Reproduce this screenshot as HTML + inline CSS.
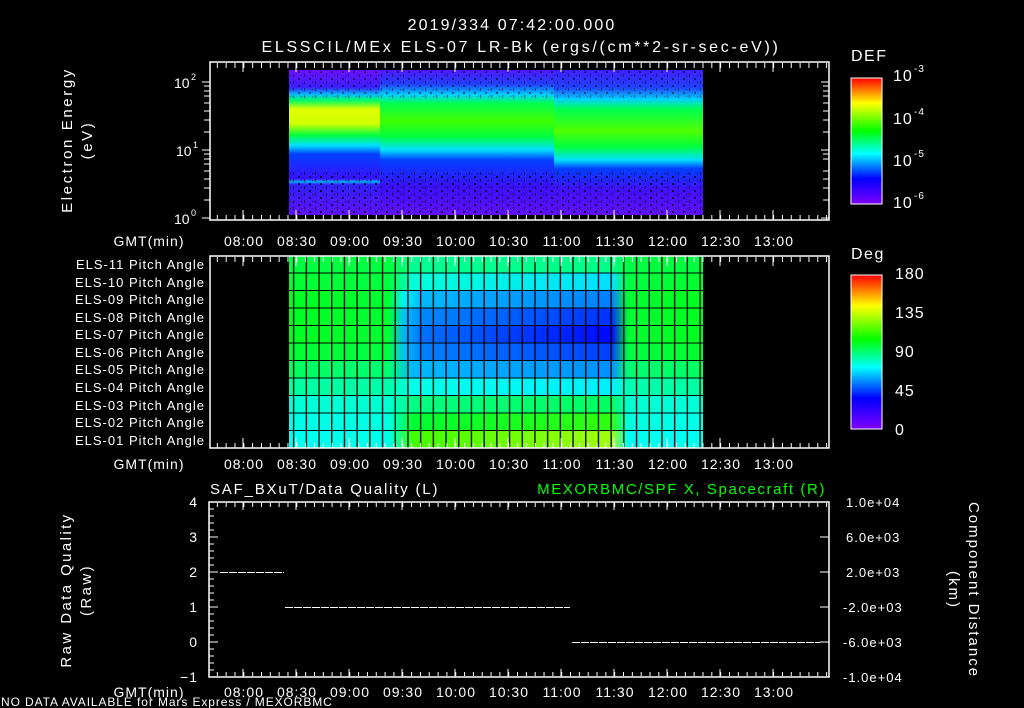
<!DOCTYPE html>
<html><head><meta charset="utf-8"><style>
html,body{margin:0;padding:0;background:#000;width:1024px;height:708px;overflow:hidden}
svg{display:block}
text{font-family:"Liberation Sans",sans-serif;fill:#fff;letter-spacing:1px}
</style></head><body>
<svg width="1024" height="708" viewBox="0 0 1024 708" xmlns="http://www.w3.org/2000/svg">
<defs>
<linearGradient id="sA" x1="0" y1="0" x2="0" y2="1">
<stop offset="0" stop-color="#6a10ff"/><stop offset="0.12" stop-color="#3a20ff"/><stop offset="0.17" stop-color="#00c0ff"/><stop offset="0.21" stop-color="#00ff60"/><stop offset="0.27" stop-color="#e0ff00"/><stop offset="0.37" stop-color="#d0ff00"/><stop offset="0.45" stop-color="#00ff40"/><stop offset="0.52" stop-color="#00e0ff"/><stop offset="0.58" stop-color="#0040ff"/><stop offset="0.75" stop-color="#3a10ff"/><stop offset="0.77" stop-color="#00b0ff"/><stop offset="0.79" stop-color="#3020ff"/><stop offset="1" stop-color="#6010ff"/></linearGradient>
<linearGradient id="sB" x1="0" y1="0" x2="0" y2="1">
<stop offset="0" stop-color="#5018ff"/><stop offset="0.1" stop-color="#2040ff"/><stop offset="0.17" stop-color="#00d0ff"/><stop offset="0.23" stop-color="#00ff50"/><stop offset="0.35" stop-color="#40ff00"/><stop offset="0.46" stop-color="#00ff40"/><stop offset="0.55" stop-color="#00e0ff"/><stop offset="0.62" stop-color="#0040ff"/><stop offset="0.8" stop-color="#3a10ff"/><stop offset="1" stop-color="#6010ff"/></linearGradient>
<linearGradient id="sC" x1="0" y1="0" x2="0" y2="1">
<stop offset="0" stop-color="#4020ff"/><stop offset="0.12" stop-color="#2040ff"/><stop offset="0.2" stop-color="#00d0ff"/><stop offset="0.27" stop-color="#00ff50"/><stop offset="0.42" stop-color="#50ff00"/><stop offset="0.53" stop-color="#00ff40"/><stop offset="0.62" stop-color="#00e0ff"/><stop offset="0.68" stop-color="#0040ff"/><stop offset="0.82" stop-color="#4010ff"/><stop offset="1" stop-color="#6010ff"/></linearGradient>
<linearGradient id="cb" x1="0" y1="0" x2="0" y2="1">
<stop offset="0" stop-color="#ff0000"/><stop offset="0.2" stop-color="#ffff00"/><stop offset="0.42" stop-color="#00ff00"/><stop offset="0.6" stop-color="#00ffff"/><stop offset="0.8" stop-color="#0000ff"/><stop offset="1" stop-color="#8000ff"/></linearGradient>
<pattern id="noise" width="11" height="7" patternUnits="userSpaceOnUse"><rect x="1" y="1" width="2" height="2" fill="#000"/><rect x="7" y="4" width="1" height="3" fill="#000"/><rect x="4" y="5" width="1" height="1" fill="#000"/></pattern>
<pattern id="grid" x="289" y="256" width="12.7" height="17.5" patternUnits="userSpaceOnUse"><rect x="4" y="0" width="1.3" height="17.5" fill="#000"/><rect x="0" y="16.5" width="12.7" height="1.3" fill="#000"/></pattern>
<pattern id="mt" x="208" y="0" width="8.83" height="10" patternUnits="userSpaceOnUse"><rect x="0" y="0" width="1" height="10" fill="#fff"/></pattern>
</defs>

<text x="512" y="30" font-size="16" text-anchor="middle" style="letter-spacing:2.1px">2019/334 07:42:00.000</text>
<text x="521" y="52" font-size="16" text-anchor="middle" style="letter-spacing:2.7px">ELSSCIL/MEx ELS-07 LR-Bk  (ergs/(cm**2-sr-sec-eV))</text>

<!-- top panel -->
<rect x="289" y="70" width="95" height="145" fill="url(#sA)"/>
<rect x="380" y="70" width="178" height="145" fill="url(#sB)"/>
<rect x="554" y="70" width="149" height="145" fill="url(#sC)"/>
<rect x="289" y="70" width="414" height="28" fill="url(#noise)" opacity="0.5"/>
<rect x="289" y="172" width="414" height="43" fill="url(#noise)" opacity="0.7"/>
<g fill="none" stroke="#fff" stroke-width="1.5"><rect x="210" y="62" width="619" height="158"/></g>
<rect x="210" y="63" width="619" height="5" fill="url(#mt)"/>
<rect x="210" y="215" width="619" height="5" fill="url(#mt)"/>
<g stroke="#fff" stroke-width="1">
<path d="M243 62v10M296 62v10M349 62v10M402 62v10M455 62v10M508 62v10M561 62v10M614 62v10M667 62v10M720 62v10M773 62v10M243 220v-10M296 220v-10M349 220v-10M402 220v-10M455 220v-10M508 220v-10M561 220v-10M614 220v-10M667 220v-10M720 220v-10M773 220v-10"/>
<path d="M202 82h8M202 150h8M202 218h8M204 200h6M204 188h6M204 179h6M204 171h6M204 164h6M204 159h6M204 154h6M204 132h6M204 120h6M204 111h6M204 103h6M204 96h6M204 91h6M204 86h6"/>
<path d="M829 82h-8M829 150h-8M829 218h-8M829 132h-6M829 120h-6M829 111h-6M829 103h-6M829 200h-6M829 188h-6M829 179h-6M829 171h-6M829 86h-6M829 91h-6M829 96h-6M829 154h-6M829 159h-6"/>
</g>
<text x="174" y="88" font-size="14" style="letter-spacing:0">10</text><text x="191" y="80" font-size="9">2</text>
<text x="176" y="156" font-size="14" style="letter-spacing:0">10</text><text x="193" y="148" font-size="9">1</text>
<text x="174" y="224" font-size="14" style="letter-spacing:0">10</text><text x="191" y="216" font-size="9">0</text>
<text transform="translate(72,140) rotate(-90)" font-size="15" text-anchor="middle" style="letter-spacing:2.6px">Electron Energy</text>
<text transform="translate(92,140) rotate(-90)" font-size="15" text-anchor="middle" style="letter-spacing:2.6px">(eV)</text>

<g font-size="14" text-anchor="middle" style="letter-spacing:1.3px">
<text x="149" y="246">GMT(min)</text>
<text x="244" y="246">08:00</text><text x="297" y="246">08:30</text><text x="350" y="246">09:00</text><text x="403" y="246">09:30</text><text x="456" y="246">10:00</text><text x="509" y="246">10:30</text><text x="562" y="246">11:00</text><text x="615" y="246">11:30</text><text x="668" y="246">12:00</text><text x="721" y="246">12:30</text><text x="774" y="246">13:00</text>
</g>

<!-- colorbar 1 -->
<text x="851" y="61" font-size="16" style="letter-spacing:1.5px">DEF</text>
<rect x="851" y="78" width="31" height="126" fill="url(#cb)" stroke="#fff" stroke-width="1"/>
<text x="893" y="81" font-size="16">10</text><text x="914" y="72" font-size="10">-3</text>
<text x="893" y="124" font-size="16">10</text><text x="914" y="115" font-size="10">-4</text>
<text x="893" y="166" font-size="16">10</text><text x="914" y="157" font-size="10">-5</text>
<text x="893" y="208" font-size="16">10</text><text x="914" y="199" font-size="10">-6</text>

<!-- middle panel -->
<defs>
<linearGradient id="r1"><stop offset="0" stop-color="#00ff40"/><stop offset="0.24" stop-color="#00ff40"/><stop offset="0.3" stop-color="#00ff90"/><stop offset="0.78" stop-color="#00ff88"/><stop offset="0.82" stop-color="#00ff40"/><stop offset="1" stop-color="#00ff40"/></linearGradient>
<linearGradient id="r2"><stop offset="0" stop-color="#00ff30"/><stop offset="0.24" stop-color="#00ff40"/><stop offset="0.3" stop-color="#00ffd8"/><stop offset="0.78" stop-color="#00e0ff"/><stop offset="0.82" stop-color="#00ff40"/><stop offset="1" stop-color="#00ff30"/></linearGradient>
<linearGradient id="r3"><stop offset="0" stop-color="#00ff20"/><stop offset="0.24" stop-color="#00ff30"/><stop offset="0.28" stop-color="#00f0ff"/><stop offset="0.32" stop-color="#00b8ff"/><stop offset="0.78" stop-color="#0080ff"/><stop offset="0.82" stop-color="#00ff30"/><stop offset="1" stop-color="#00ff20"/></linearGradient>
<linearGradient id="r4"><stop offset="0" stop-color="#00ff20"/><stop offset="0.24" stop-color="#00ff30"/><stop offset="0.28" stop-color="#00c0ff"/><stop offset="0.32" stop-color="#0088ff"/><stop offset="0.78" stop-color="#0030ff"/><stop offset="0.82" stop-color="#00ff30"/><stop offset="1" stop-color="#00ff20"/></linearGradient>
<linearGradient id="r5"><stop offset="0" stop-color="#00ff20"/><stop offset="0.24" stop-color="#00ff30"/><stop offset="0.28" stop-color="#00b0ff"/><stop offset="0.32" stop-color="#0070ff"/><stop offset="0.78" stop-color="#0008ff"/><stop offset="0.82" stop-color="#00ff30"/><stop offset="1" stop-color="#00ff20"/></linearGradient>
<linearGradient id="r6"><stop offset="0" stop-color="#00ff30"/><stop offset="0.24" stop-color="#00ff40"/><stop offset="0.28" stop-color="#00c0ff"/><stop offset="0.32" stop-color="#0080ff"/><stop offset="0.78" stop-color="#0040ff"/><stop offset="0.82" stop-color="#00ff40"/><stop offset="1" stop-color="#00ff30"/></linearGradient>
<linearGradient id="r7"><stop offset="0" stop-color="#00ff60"/><stop offset="0.24" stop-color="#00ff70"/><stop offset="0.3" stop-color="#00b8ff"/><stop offset="0.78" stop-color="#0090ff"/><stop offset="0.82" stop-color="#00ff70"/><stop offset="1" stop-color="#00ff60"/></linearGradient>
<linearGradient id="r8"><stop offset="0" stop-color="#00ffa0"/><stop offset="0.24" stop-color="#00ffa8"/><stop offset="0.3" stop-color="#00ffe8"/><stop offset="0.78" stop-color="#00f0ff"/><stop offset="0.82" stop-color="#00ffb0"/><stop offset="1" stop-color="#00ffa0"/></linearGradient>
<linearGradient id="r9"><stop offset="0" stop-color="#00ffd8"/><stop offset="0.24" stop-color="#00ffd0"/><stop offset="0.3" stop-color="#00ff80"/><stop offset="0.78" stop-color="#00ff60"/><stop offset="0.82" stop-color="#00ffd0"/><stop offset="1" stop-color="#00ffd8"/></linearGradient>
<linearGradient id="r10"><stop offset="0" stop-color="#00ffe8"/><stop offset="0.24" stop-color="#00ffe0"/><stop offset="0.3" stop-color="#00ff30"/><stop offset="0.78" stop-color="#30ff10"/><stop offset="0.82" stop-color="#00ffe0"/><stop offset="1" stop-color="#00ffe8"/></linearGradient>
<linearGradient id="r11"><stop offset="0" stop-color="#00fff0"/><stop offset="0.24" stop-color="#00ffe8"/><stop offset="0.3" stop-color="#40ff00"/><stop offset="0.78" stop-color="#a0ff10"/><stop offset="0.82" stop-color="#00fff0"/><stop offset="1" stop-color="#00fff0"/></linearGradient>
</defs>
<g>
<rect x="289" y="256" width="414" height="17.6" fill="url(#r1)"/>
<rect x="289" y="273.5" width="414" height="17.6" fill="url(#r2)"/>
<rect x="289" y="291" width="414" height="17.6" fill="url(#r3)"/>
<rect x="289" y="308.5" width="414" height="17.6" fill="url(#r4)"/>
<rect x="289" y="326" width="414" height="17.6" fill="url(#r5)"/>
<rect x="289" y="343.5" width="414" height="17.6" fill="url(#r6)"/>
<rect x="289" y="361" width="414" height="17.6" fill="url(#r7)"/>
<rect x="289" y="378.5" width="414" height="17.6" fill="url(#r8)"/>
<rect x="289" y="396" width="414" height="17.6" fill="url(#r9)"/>
<rect x="289" y="413.5" width="414" height="17.6" fill="url(#r10)"/>
<rect x="289" y="431" width="414" height="17" fill="url(#r11)"/>
<rect x="289" y="256" width="414" height="192" fill="url(#grid)"/>
</g>
<rect x="210" y="256" width="619" height="192" fill="none" stroke="#fff" stroke-width="1.5"/>
<rect x="210" y="257" width="619" height="5" fill="url(#mt)"/>
<rect x="210" y="443" width="619" height="5" fill="url(#mt)"/>
<path stroke="#fff" d="M243 256v10M296 256v10M349 256v10M402 256v10M455 256v10M508 256v10M561 256v10M614 256v10M667 256v10M720 256v10M773 256v10M243 448v-10M296 448v-10M349 448v-10M402 448v-10M455 448v-10M508 448v-10M561 448v-10M614 448v-10M667 448v-10M720 448v-10M773 448v-10"/>
<g font-size="13" text-anchor="end" style="letter-spacing:1.7px">
<text x="205" y="269">ELS-11 Pitch Angle</text>
<text x="205" y="287">ELS-10 Pitch Angle</text>
<text x="205" y="304">ELS-09 Pitch Angle</text>
<text x="205" y="322">ELS-08 Pitch Angle</text>
<text x="205" y="339">ELS-07 Pitch Angle</text>
<text x="205" y="357">ELS-06 Pitch Angle</text>
<text x="205" y="374">ELS-05 Pitch Angle</text>
<text x="205" y="392">ELS-04 Pitch Angle</text>
<text x="205" y="410">ELS-03 Pitch Angle</text>
<text x="205" y="427">ELS-02 Pitch Angle</text>
<text x="205" y="445">ELS-01 Pitch Angle</text>
</g>
<g font-size="14" text-anchor="middle" style="letter-spacing:1.3px">
<text x="149" y="469">GMT(min)</text>
<text x="244" y="469">08:00</text><text x="297" y="469">08:30</text><text x="350" y="469">09:00</text><text x="403" y="469">09:30</text><text x="456" y="469">10:00</text><text x="509" y="469">10:30</text><text x="562" y="469">11:00</text><text x="615" y="469">11:30</text><text x="668" y="469">12:00</text><text x="721" y="469">12:30</text><text x="774" y="469">13:00</text>
</g>

<!-- colorbar 2 -->
<text x="851" y="259" font-size="16" style="letter-spacing:1.5px">Deg</text>
<rect x="851" y="275" width="31" height="154" fill="url(#cb)" stroke="#fff" stroke-width="1"/>
<g font-size="16"><text x="895" y="279">180</text><text x="895" y="318">135</text><text x="895" y="357">90</text><text x="895" y="396">45</text><text x="895" y="435">0</text></g>

<!-- bottom panel -->
<text x="210" y="494" font-size="15" style="letter-spacing:1.8px">SAF_BXuT/Data Quality (L)</text>
<text x="826" y="494" font-size="15" text-anchor="end" style="fill:#00ff00;letter-spacing:1.6px">MEXORBMC/SPF X, Spacecraft (R)</text>
<rect x="209" y="502" width="620" height="175" fill="none" stroke="#fff" stroke-width="1.5"/>
<rect x="209" y="503" width="620" height="4" fill="url(#mt)"/>
<rect x="209" y="672" width="620" height="4" fill="url(#mt)"/>
<path stroke="#fff" d="M243 502v8M296 502v8M349 502v8M402 502v8M455 502v8M508 502v8M561 502v8M614 502v8M667 502v8M720 502v8M773 502v8M243 677v-8M296 677v-8M349 677v-8M402 677v-8M455 677v-8M508 677v-8M561 677v-8M614 677v-8M667 677v-8M720 677v-8M773 677v-8"/>
<path stroke="#fff" d="M209 502h9M209 537h9M209 572h9M209 607h9M209 642h9M209 677h9M209 509h5M209 516h5M209 523h5M209 530h5M209 544h5M209 551h5M209 558h5M209 565h5M209 579h5M209 586h5M209 593h5M209 600h5M209 614h5M209 621h5M209 628h5M209 635h5M209 649h5M209 656h5M209 663h5M209 670h5"/>
<path stroke="#fff" d="M829 502h-9M829 537h-9M829 572h-9M829 607h-9M829 642h-9M829 677h-9"/>
<path stroke="#fff" stroke-dasharray="8,1" d="M220 572.5h64M285 607.5h285M572 642.5h248"/>
<g font-size="14" text-anchor="end"><text x="198" y="507">4</text><text x="198" y="542">3</text><text x="198" y="577">2</text><text x="198" y="612">1</text><text x="198" y="647">0</text><text x="198" y="682">−1</text></g>
<g font-size="13" style="letter-spacing:0.6px"><text x="846" y="507">1.0e+04</text><text x="846" y="542">6.0e+03</text><text x="846" y="577">2.0e+03</text><text x="843" y="612">-2.0e+03</text><text x="843" y="647">-6.0e+03</text><text x="843" y="682">-1.0e+04</text></g>
<text transform="translate(71,590) rotate(-90)" font-size="15" text-anchor="middle" style="letter-spacing:2.4px">Raw Data Quality</text>
<text transform="translate(91,590) rotate(-90)" font-size="15" text-anchor="middle" style="letter-spacing:2.4px">(Raw)</text>
<text transform="translate(969,590) rotate(90)" font-size="15" text-anchor="middle" style="letter-spacing:2px">Component Distance</text>
<text transform="translate(949,590) rotate(90)" font-size="15" text-anchor="middle" style="letter-spacing:2px">(km)</text>
<g font-size="14" text-anchor="middle" style="letter-spacing:1.3px">
<text x="149" y="697">GMT(min)</text>
<text x="244" y="697">08:00</text><text x="297" y="697">08:30</text><text x="350" y="697">09:00</text><text x="403" y="697">09:30</text><text x="456" y="697">10:00</text><text x="509" y="697">10:30</text><text x="562" y="697">11:00</text><text x="615" y="697">11:30</text><text x="668" y="697">12:00</text><text x="721" y="697">12:30</text><text x="774" y="697">13:00</text>
</g>
<text x="1" y="706" font-size="12" style="letter-spacing:0.9px">NO DATA AVAILABLE for Mars Express / MEXORBMC</text>
</svg>
</body></html>
